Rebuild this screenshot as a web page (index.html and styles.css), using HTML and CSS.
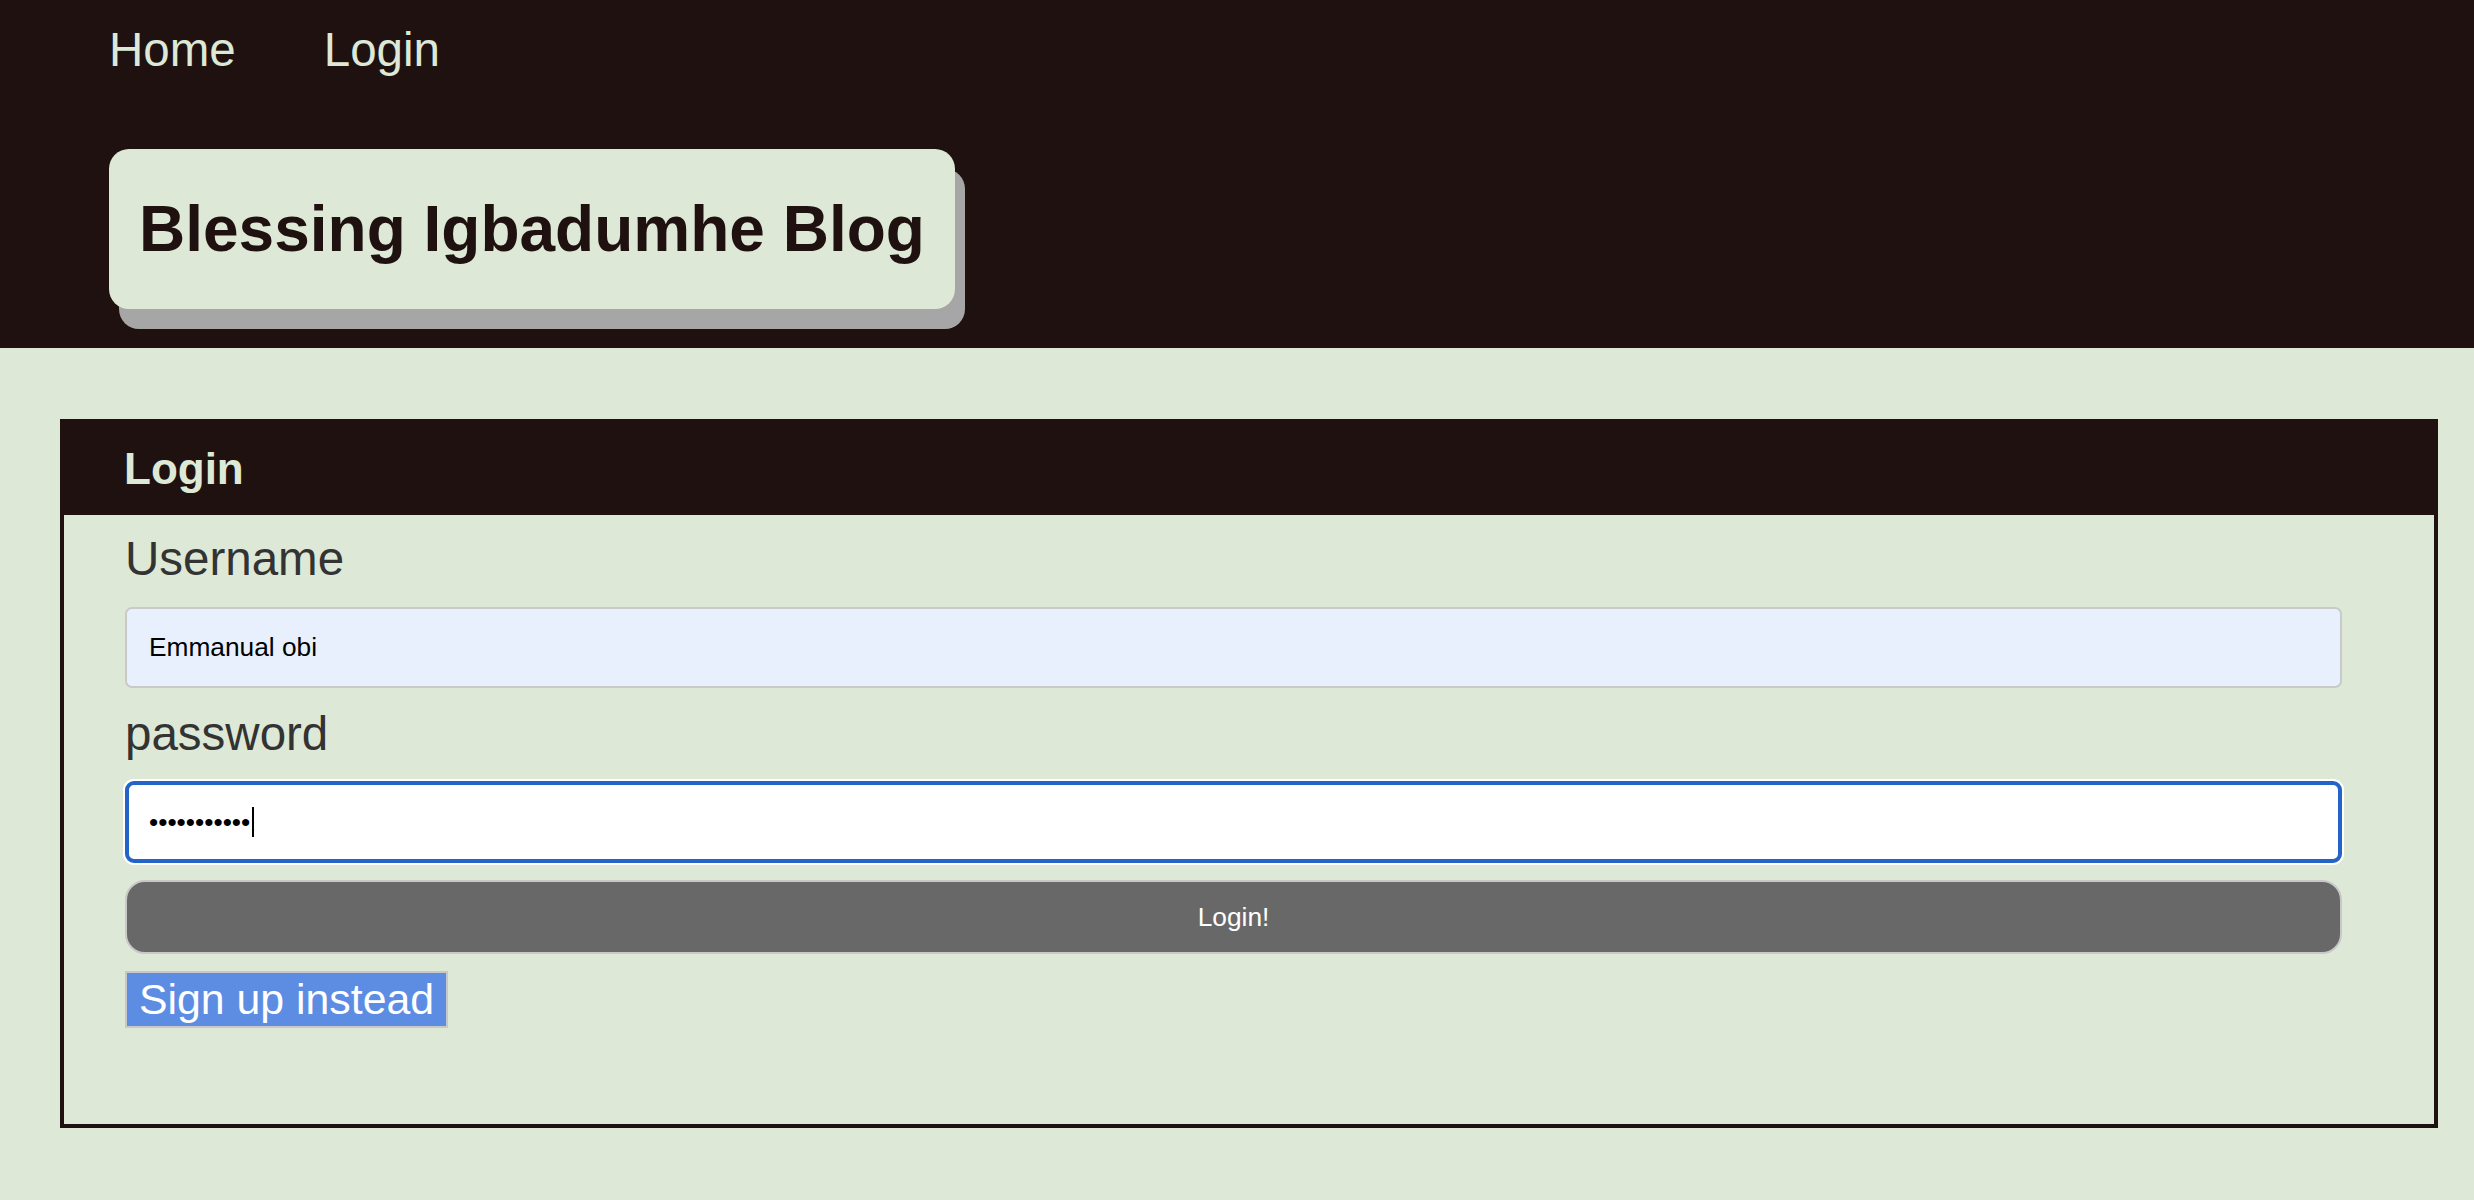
FILE: index.html
```html
<!DOCTYPE html>
<html lang="en">
<head>
<meta charset="utf-8">
<title>Blessing Igbadumhe Blog - Login</title>
<link rel="stylesheet" href="styles.css">
</head>
<body>
<header class="site-header">
  <nav class="nav">
    <a class="nav__link" href="#">Home</a>
    <a class="nav__link" href="#">Login</a>
  </nav>
  <div class="title-card">
    <h1 class="title-card__text">Blessing Igbadumhe Blog</h1>
  </div>
</header>
<main class="content">
  <section class="login-card">
    <div class="login-card__head">
      <h2 class="login-card__title">Login</h2>
    </div>
    <form class="login-form" onsubmit="return false">
      <label class="login-form__label" for="username">Username</label>
      <input class="field field--autofill" id="username" type="text" value="Emmanual obi">
      <label class="login-form__label login-form__label--pw" for="password">password</label>
      <span class="field-wrap">
        <input class="field field--focus" id="password" type="password" value="abcdefghijk">
        <span class="caret"></span>
      </span>
      <button class="btn-submit" type="submit">Login!</button>
      <div class="signup-row"><a class="btn-signup" href="#">Sign up instead</a></div>
    </form>
  </section>
</main>
</body>
</html>
```

FILE: styles.css
```css
* { box-sizing: border-box; }

html, body {
  margin: 0;
  padding: 0;
}

body {
  background: #dde9d6;
  font-family: "Liberation Sans", Arial, sans-serif;
  min-height: 1200px;
}

.site-header {
  background: #201111;
  padding: 22px 0 39px 109px;
}

.nav {
  display: flex;
  gap: 88px;
}

.nav__link {
  color: #dde9d6;
  text-decoration: none;
  font-size: 47.5px;
  line-height: normal;
}

.title-card {
  display: inline-block;
  margin-top: 72px;
  background: #dde9d6;
  border-radius: 20px;
  padding: 0 30px;
  box-shadow: 10px 20px 0 #a6a6a6;
}

.title-card__text {
  margin: 43px 0;
  font-size: 64px;
  font-weight: 700;
  line-height: normal;
  color: #201111;
}

.content {
  padding: 71px 36px 0 60px;
}

.login-card {
  border: 4px solid #201111;
}

.login-card__head {
  background: #201111;
  margin: -4px -4px 0 -4px;
  padding: 25px 0 21px 64px;
}

.login-card__title {
  margin: 0;
  font-size: 44px;
  font-weight: 700;
  line-height: normal;
  color: #dde9d6;
}

.login-form {
  display: flex;
  flex-direction: column;
  align-items: stretch;
  padding: 16px 92px 96px 61px;
}

.login-form__label {
  font-size: 47.5px;
  line-height: normal;
  color: #333333;
  margin-bottom: 21px;
}

.login-form__label--pw {
  margin-bottom: 20px;
}

.field {
  display: block;
  width: 100%;
  height: 81px;
  margin: 0 0 18px 0;
  font-family: "Liberation Sans", Arial, sans-serif;
  font-size: 26.3px;
  color: #000;
  border-radius: 7px;
  outline: none;
}

.field--autofill {
  background: #e8f0fe;
  border: 2px solid #c9c9c9;
  padding: 0 22px;
}

.field-wrap {
  display: block;
  position: relative;
  margin-bottom: 17px;
}

.field--focus {
  margin: 0;
  height: 82px;
  background: #ffffff;
  border: 4px solid #2463c8;
  border-radius: 9px;
  box-shadow: 0 0 0 2px #ffffff;
  padding: 0 20px;
  letter-spacing: 0;
}

.caret {
  position: absolute;
  left: 127px;
  top: 26px;
  width: 2px;
  height: 30px;
  background: #000;
}

.btn-submit {
  display: block;
  width: 100%;
  height: 74px;
  margin: 0 0 17px 0;
  background: #686868;
  color: #ffffff;
  border: 2px solid #c8c8c8;
  border-radius: 20px;
  font-family: "Liberation Sans", Arial, sans-serif;
  font-size: 26.3px;
  cursor: pointer;
}

.signup-row {
  display: flex;
}

.btn-signup {
  display: inline-block;
  background: #5d8de3;
  color: #ffffff;
  text-decoration: none;
  border: 2px solid #c8c8c8;
  font-size: 42.8px;
  line-height: normal;
  padding: 2px 12px;
}
```
